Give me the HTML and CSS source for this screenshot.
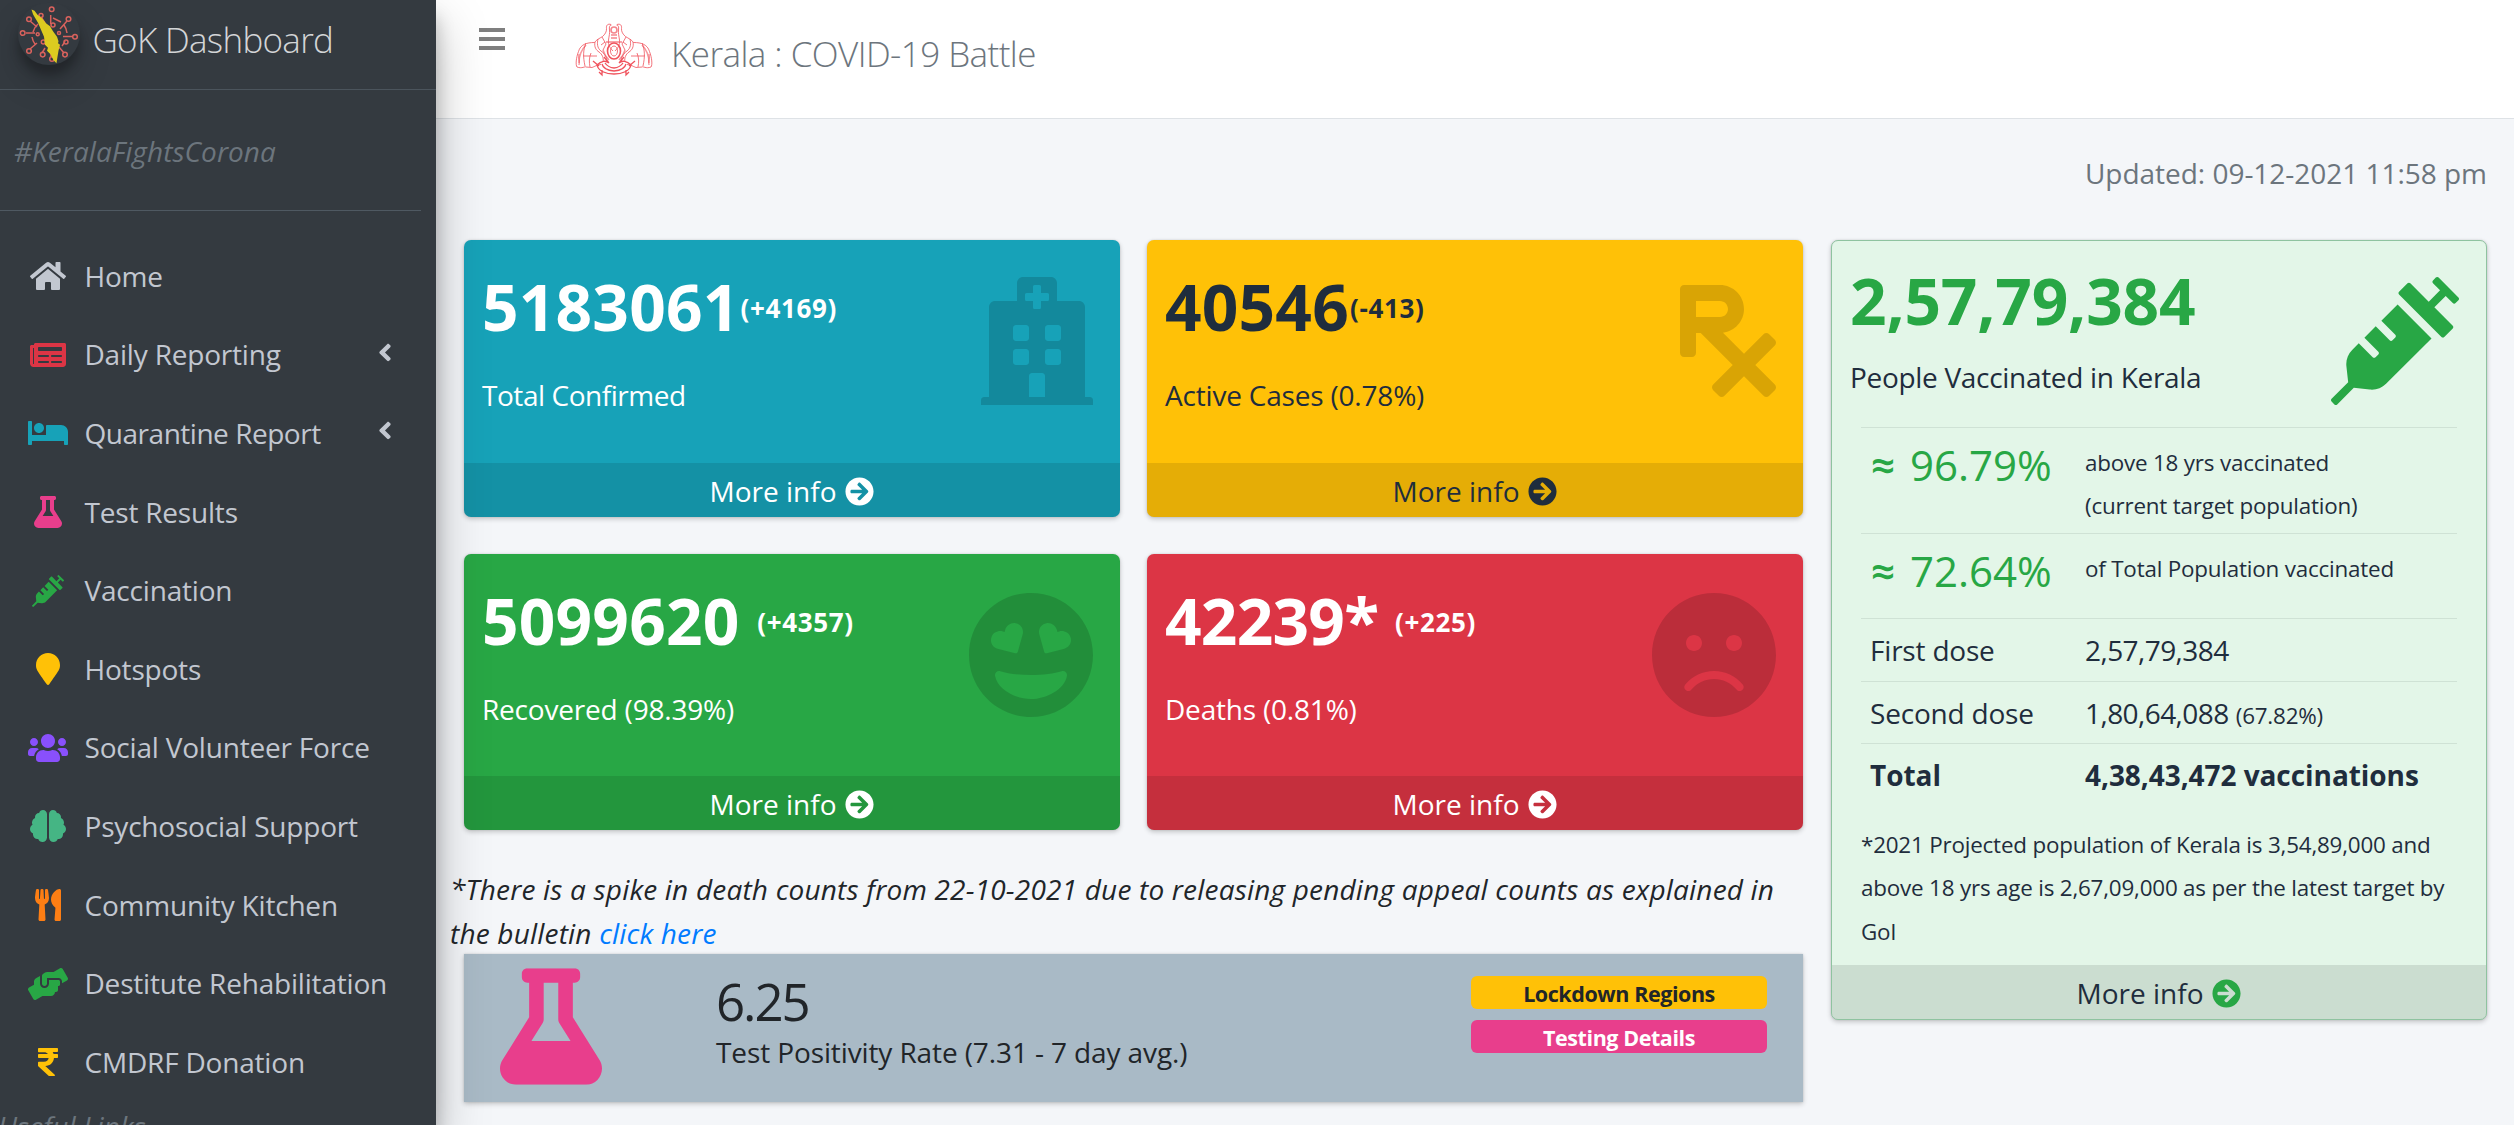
FILE: index.html
```html
<!DOCTYPE html>
<html lang="en">
<head>
<meta charset="utf-8">
<title>GoK Dashboard</title>
<link rel="stylesheet" href="styles.css">
</head>
<body>
<svg class="defs" width="0" height="0">
  <symbol id="arrow" viewBox="0 0 512 512"><path d="M256 8c137 0 248 111 248 248S393 504 256 504 8 393 8 256 119 8 256 8zm-28.9 143.6l75.5 72.4H120c-13.3 0-24 10.7-24 24v16c0 13.3 10.7 24 24 24h182.6l-75.5 72.4c-9.7 9.3-9.9 24.8-.4 34.3l11 10.9c9.4 9.4 24.6 9.4 33.9 0L404.3 273c9.4-9.4 9.4-24.6 0-33.9L271.6 106.3c-9.4-9.4-24.6-9.4-33.9 0l-11 10.9c-9.5 9.6-9.3 25.1.4 34.4z"/></symbol>
  <symbol id="flask" viewBox="0 0 448 512"><path d="M437.2 403.5L320 215V64h8c13.3 0 24-10.7 24-24V24c0-13.3-10.7-24-24-24H120c-13.3 0-24 10.7-24 24v16c0 13.3 10.7 24 24 24h8v151L10.8 403.5C-18.5 450.6 15.3 512 70.9 512h306.2c55.7 0 89.4-61.5 60.1-108.5zM137.9 320l48.2-77.6c3.7-5.2 5.8-11.6 5.8-18.4V64h64v160c0 6.9 2.2 13.2 5.8 18.4l48.2 77.6h-172z"/></symbol>
  <symbol id="syringe" viewBox="0 0 512 512"><path d="M201.5 174.8l55.7 55.8c3.1 3.1 3.1 8.2 0 11.3l-11.3 11.3c-3.1 3.1-8.2 3.1-11.3 0l-55.7-55.8-45.3 45.3 55.8 55.8c3.1 3.1 3.1 8.2 0 11.3l-11.3 11.3c-3.1 3.1-8.2 3.1-11.3 0L111 265.2l-26.4 26.4c-17.3 17.3-25.6 41.1-23 65.4l7.1 63.6L2.3 487c-3.1 3.1-3.1 8.2 0 11.3l11.3 11.3c3.1 3.1 8.2 3.1 11.3 0l66.3-66.3 63.6 7.1c23.9 2.6 47.9-5.4 65.4-23l181.9-181.9-135.7-135.7-64.9 65zm308.2-93.3L430.5 2.3c-3.1-3.1-8.2-3.1-11.3 0l-11.3 11.3c-3.1 3.1-3.1 8.2 0 11.3l28.3 28.3-45.3 45.3-56.6-56.6-17-17c-3.1-3.1-8.2-3.1-11.3 0l-33.9 33.9c-3.1 3.1-3.1 8.2 0 11.3l17 17L424.8 223l17 17c3.1 3.1 8.2 3.1 11.3 0l33.9-34c3.1-3.1 3.1-8.2 0-11.3l-73.5-73.5 45.3-45.3 28.3 28.3c3.1 3.1 8.2 3.1 11.3 0l11.3-11.3c3.1-3.2 3.1-8.2 0-11.4z"/></symbol>
  <symbol id="left" viewBox="0 0 256 512"><path d="M31.7 239l136-136c9.4-9.4 24.6-9.4 33.9 0l22.6 22.6c9.4 9.4 9.4 24.6 0 33.9L127.9 256l96.4 96.4c9.4 9.4 9.4 24.6 0 33.9L201.7 409c-9.4 9.4-24.6 9.4-33.9 0l-136-136c-9.5-9.4-9.5-24.6-.1-34z"/></symbol>
</svg>

<div class="app">
  <aside class="sidebar">
    <a class="brand">
      <svg class="brand-logo" viewBox="0 0 62 62">
        <g fill="none" stroke="#d9625d" stroke-width="1.5">
          <path d="M32.7 12v9M49 18l-7 8M55 33.6H45M46 50l-5-6M33 54v-9M24 50l3-5M12 46l7-6M8 30h9M12 18l7 6M23 14l4 6M20 21a16 16 0 0 0-5 8M14 34a16 16 0 0 0 3 7M35 15l8 4M46 22a16 16 0 0 1 3 8M47 38a16 16 0 0 1-3 5" />
          <circle cx="33.7" cy="6.3" r="2.3"/><circle cx="50.5" cy="16" r="2.3"/><circle cx="57" cy="33.8" r="2.3"/><circle cx="47" cy="51.6" r="2.3"/><circle cx="34" cy="56" r="2.3"/><circle cx="24.7" cy="51.6" r="2.3"/><circle cx="11" cy="48" r="2.3"/><circle cx="4.7" cy="30" r="2.3"/><circle cx="11" cy="16.3" r="2.3"/><circle cx="23" cy="12.4" r="2"/>
          <circle cx="35" cy="22" r="2"/><circle cx="19.7" cy="31.3" r="1.5"/><circle cx="41" cy="30" r="1.5"/><circle cx="25.3" cy="39" r="2"/><circle cx="48" cy="39" r="2"/>
        </g>
        <path fill="#dccb20" d="M13.5 6.5l3 1.2 3 4 4.5 3.600 4 5 4 3 3 5 4 5.500 1.500 4.500-.5 2 2 1.500-1.500 6-1 6-1 6.500-3-3-3-6-3.500-3.500 1-3-3-3-1-8-3-7-3-7-3-5-2-3.500z"/>
      </svg>
      <span class="brand-text">GoK Dashboard</span>
    </a>
    <div class="user-panel">#KeralaFightsCorona</div>
    <nav class="nav">
      <a class="nav-item"><span class="ico"><svg style="width:36px" viewBox="0 0 576 512"><path d="M280.37 148.26L96 300.11V464a16 16 0 0 0 16 16l112.06-.29a16 16 0 0 0 15.92-16V368a16 16 0 0 1 16-16h64a16 16 0 0 1 16 16v95.64a16 16 0 0 0 16 16.05L464 480a16 16 0 0 0 16-16V300L295.67 148.26a12.19 12.19 0 0 0-15.3 0zM571.6 251.47L488 182.56V44.05a12 12 0 0 0-12-12h-56a12 12 0 0 0-12 12v72.61L318.47 43a48 48 0 0 0-61 0L4.34 251.47a12 12 0 0 0-1.6 16.9l25.5 31A12 12 0 0 0 45.15 301l235.22-193.74a12.19 12.19 0 0 1 15.3 0L530.9 301a12 12 0 0 0 16.9-1.6l25.5-31a12 12 0 0 0-1.7-16.93z"/></svg></span><span>Home</span></a>
      <a class="nav-item"><span class="ico red"><svg style="width:36px" viewBox="0 0 576 512"><path d="M552 64H88c-13.255 0-24 10.745-24 24v8H24c-13.255 0-24 10.745-24 24v272c0 30.928 25.072 56 56 56h472c26.51 0 48-21.490 48-48V88c0-13.255-10.745-24-24-24zM56 400a8 8 0 0 1-8-8V144h16v248a8 8 0 0 1-8 8zm236-16H140c-6.627 0-12-5.373-12-12v-8c0-6.627 5.373-12 12-12h152c6.627 0 12 5.373 12 12v8c0 6.627-5.373 12-12 12zm208 0H348c-6.627 0-12-5.373-12-12v-8c0-6.627 5.373-12 12-12h152c6.627 0 12 5.373 12 12v8c0 6.627-5.373 12-12 12zm-208-96H140c-6.627 0-12-5.373-12-12v-8c0-6.627 5.373-12 12-12h152c6.627 0 12 5.373 12 12v8c0 6.627-5.373 12-12 12zm208 0H348c-6.627 0-12-5.373-12-12v-8c0-6.627 5.373-12 12-12h152c6.627 0 12 5.373 12 12v8c0 6.627-5.373 12-12 12zm0-96H140c-6.627 0-12-5.373-12-12v-40c0-6.627 5.373-12 12-12h360c6.627 0 12 5.373 12 12v40c0 6.627-5.373 12-12 12z"/></svg></span><span>Daily Reporting</span><svg class="chev" viewBox="0 0 256 512"><use href="#left"/></svg></a>
      <a class="nav-item"><span class="ico teal"><svg style="width:40px" viewBox="0 0 640 512"><path d="M176 256c44.11 0 80-35.89 80-80s-35.89-80-80-80-80 35.89-80 80 35.89 80 80 80zm352-128H304c-8.84 0-16 7.16-16 16v144H64V80c0-8.84-7.16-16-16-16H16C7.16 64 0 71.16 0 80v352c0 8.84 7.16 16 16 16h32c8.84 0 16-7.16 16-16v-48h512v48c0 8.84 7.16 16 16 16h32c8.84 0 16-7.16 16-16V240c0-61.86-50.14-112-112-112z"/></svg></span><span class="fit-q">Quarantine Report</span><svg class="chev" viewBox="0 0 256 512"><use href="#left"/></svg></a>
      <a class="nav-item"><span class="ico pink"><svg style="width:28px" viewBox="0 0 448 512"><use href="#flask"/></svg></span><span>Test Results</span></a>
      <a class="nav-item"><span class="ico green"><svg style="width:32px" viewBox="0 0 512 512"><use href="#syringe"/></svg></span><span>Vaccination</span></a>
      <a class="nav-item"><span class="ico yellow"><svg style="width:24px" viewBox="0 0 384 512"><path d="M172.268 501.67C26.97 291.031 0 269.413 0 192 0 85.961 85.961 0 192 0s192 85.961 192 192c0 77.413-26.97 99.031-172.268 309.67-9.535 13.774-29.93 13.773-39.464 0z"/></svg></span><span>Hotspots</span></a>
      <a class="nav-item"><span class="ico purple"><svg style="width:40px" viewBox="0 0 640 512"><path d="M96 224c35.3 0 64-28.7 64-64s-28.7-64-64-64-64 28.7-64 64 28.7 64 64 64zm448 0c35.3 0 64-28.7 64-64s-28.7-64-64-64-64 28.7-64 64 28.7 64 64 64zm32 32h-64c-17.6 0-33.5 7.1-45.1 18.6 40.3 22.1 68.9 62 75.1 109.4h66c17.7 0 32-14.3 32-32v-32c0-35.3-28.7-64-64-64zm-256 0c61.9 0 112-50.1 112-112S381.9 32 320 32 208 82.1 208 144s50.1 112 112 112zm76.8 32h-8.3c-20.8 10-43.9 16-68.5 16s-47.600-6-68.5-16h-8.3C179.6 288 128 339.6 128 403.2V432c0 26.5 21.5 48 48 48h288c26.5 0 48-21.5 48-48v-28.8c0-63.6-51.6-115.2-115.2-115.2zm-223.7-13.4C161.5 263.1 145.6 256 128 256H64c-35.3 0-64 28.7-64 64v32c0 17.7 14.3 32 32 32h65.9c6.3-47.4 34.9-87.3 75.2-109.4z"/></svg></span><span>Social Volunteer Force</span></a>
      <a class="nav-item"><span class="ico mint"><svg style="width:36px" viewBox="0 0 576 512"><path d="M208 0c-29.9 0-54.7 20.5-61.8 48.2-.8 0-1.4-.2-2.2-.2-35.3 0-64 28.7-64 64 0 4.8.6 9.5 1.7 14C52.5 138 32 166.6 32 200c0 12.6 3.2 24.3 8.3 34.9C16.3 248.7 0 274.3 0 304c0 33.3 20.4 61.9 49.4 73.9-.9 4.6-1.4 9.3-1.4 14.1 0 39.8 32.2 72 72 72 4.1 0 8.1-.5 12-1.2 9.6 28.5 36.2 49.2 68 49.2 39.8 0 72-32.2 72-72V64c0-35.3-28.7-64-64-64zm368 304c0-29.7-16.3-55.3-40.3-69.1 5.2-10.6 8.3-22.3 8.3-34.9 0-33.4-20.5-62-49.7-74 1-4.5 1.7-9.2 1.7-14 0-35.3-28.7-64-64-64-.8 0-1.5.2-2.2.2C422.7 20.5 397.9 0 368 0c-35.3 0-64 28.6-64 64v376c0 39.8 32.2 72 72 72 31.8 0 58.4-20.7 68-49.2 3.900.7 7.9 1.2 12 1.2 39.8 0 72-32.2 72-72 0-4.8-.5-9.5-1.4-14.1 29-12 49.400-40.6 49.400-73.9z"/></svg></span><span>Psychosocial Support</span></a>
      <a class="nav-item"><span class="ico orange"><svg style="width:26px" viewBox="0 0 416 512"><path d="M207.9 15.2c.8 4.7 16.1 94.5 16.1 128.8 0 52.3-27.8 89.6-68.9 104.6L168 486.7c.7 13.7-10.2 25.3-24 25.3H80c-13.7 0-24.7-11.5-24-25.3l12.9-238.1C27.7 233.6 0 196.2 0 144 0 109.6 15.3 19.9 16.1 15.2 19.3-5.1 61.4-5.4 64 16.3v141.2c1.3 3.4 15.1 3.2 16 0 1.4-25.3 7.9-139.2 8-141.8 3.3-20.8 44.7-20.8 47.9 0 .2 2.7 6.6 116.5 8 141.8.9 3.2 14.8 3.4 16 0V16.3c2.6-21.6 44.8-21.4 48-1.1zm119.2 285.7l-15 185.1c-1.2 14 9.9 26 23.9 26h56c13.3 0 24-10.7 24-24V24c0-13.2-10.7-24-24-24-82.5 0-221.4 178.5-64.9 300.9z"/></svg></span><span>Community Kitchen</span></a>
      <a class="nav-item"><span class="ico green"><svg style="width:40px" viewBox="0 0 640 512"><path d="M488 192H336v56c0 39.7-32.3 72-72 72s-72-32.3-72-72V126.400l-64.900 39C107.8 176.9 96 197.8 96 220.2v47.3l-80 46.2C.7 322.5-4.6 342.1 4.3 357.4l80 138.6c8.8 15.3 28.4 20.5 43.7 11.7L231.4 448H368c35.3 0 64-28.7 64-64h16c17.7 0 32-14.3 32-32v-64h8c13.3 0 24-10.7 24-24v-48c0-13.3-10.7-24-24-24zm147.7-37.4L555.7 16C546.9.7 527.3-4.5 512 4.3L408.6 64H306.4c-12 0-23.7 3.4-33.9 9.7L239 94.6c-9.4 5.8-15 16.1-15 27.1V248c0 22.1 17.9 40 40 40s40-17.9 40-40v-88h184c30.9 0 56 25.1 56 56v28.5l80-46.2c15.3-8.9 20.5-28.4 11.7-43.7z"/></svg></span><span>Destitute Rehabilitation</span></a>
      <a class="nav-item"><span class="ico yellow"><svg style="width:20px" viewBox="0 0 320 512"><path d="M308 96c6.627 0 12-5.373 12-12V44c0-6.627-5.373-12-12-12H12C5.373 32 0 37.373 0 44v44.748c0 6.627 5.373 12 12 12h85.28c27.308 0 48.261 9.958 60.97 27.252H12c-6.627 0-12 5.373-12 12v40c0 6.627 5.373 12 12 12h158.757c-6.217 36.086-32.961 58.632-74.757 58.632H12c-6.627 0-12 5.373-12 12v53.012c0 3.349 1.4 6.546 3.861 8.818l165.052 152.356a12.001 12.001 0 0 0 8.139 3.182h82.562c10.924 0 16.166-13.408 8.139-20.818L116.871 319.906c76.499-2.34 131.144-53.395 138.318-127.906H308c6.627 0 12-5.373 12-12v-40c0-6.627-5.373-12-12-12h-58.69c-3.486-11.541-8.28-22.246-14.252-32H308z"/></svg></span><span>CMDRF Donation</span></a>
      <div class="nav-header">Useful Links</div>
    </nav>
  </aside>

  <div class="page">
    <header class="topbar">
      <div class="bars"><i></i><i></i><i></i></div>
      <svg class="emblem" viewBox="0 0 78 54" fill="none" stroke="#f0525c" stroke-width=".8">
        <g id="half">
          <path d="M38 28c-3-3-5-6-4.500-11 .5-4 1.500-7 1-10-.5-3 .2-5 2-5M36 1.500c-3-1-5 .5-4.500 4 .3 3-1.500 6-4 8-3 2-6 3-8 6-8 0-14 2-16 9C1 35 .500 42 2 44c5 2 8-1 9 0l6 .500c3-1 5-3 9-3M20 19c-1 5 1 8 4 10s5 6 4 10M4 31c-1 4 1 7 0 11M11 20c-3 7-3 14-1 23M16 30c-2 5-2 9-1 14M23 16c-1 4-1 9 3 12s6 6 6 11M27 14l4 7-3 6M8 33h14M30 19l-4 3" />
          <path d="M39 51c-8 0-16-3-17-9 4-4 9-5 12-2M39 48c-6-.5-11-3-12-7M39 45c-4-.5-7-2-9-5M24 49l3 3v-5M18 38l6 5M29 34l5 6" stroke-width="1.300"/>
          <path d="M11 22c-5 5-7 12-7 18M28 27c1 4 3 7 6 10" stroke-width="1.500" opacity=".6"/>
        </g>
        <use href="#half" transform="matrix(-1 0 0 1 78 0)"/>
        <ellipse cx="39" cy="28" rx="6.500" ry="8" stroke-width="1.600"/><ellipse cx="39" cy="28" rx="3.500" ry="5"/>
        <circle cx="39" cy="7" r="3" stroke-width="1.600" opacity=".7"/><path d="M36 12h6M36 15h6M31 19h16" stroke-width="1.500" opacity=".7"/>
      </svg>
      <span class="title">Kerala : COVID-19 Battle</span>
    </header>

    <main class="content">
      <p class="updated">Updated: 09-12-2021 11:58 pm</p>
      <div class="columns">
        <div class="left">
          <div class="cards">
            <section class="card info">
              <div class="card-body"><h3>5183061<sup>(+4169)</sup></h3><p class="fit-t">Total Confirmed</p>
                <svg class="big" style="width:112px" viewBox="0 0 448 512"><path d="M448 492v20H0v-20c0-6.627 5.373-12 12-12h20V120c0-13.255 10.745-24 24-24h88V24c0-13.255 10.745-24 24-24h112c13.255 0 24 10.745 24 24v72h88c13.255 0 24 10.745 24 24v360h20c6.627 0 12 5.373 12 12zM308 192h-40c-6.627 0-12 5.373-12 12v40c0 6.627 5.373 12 12 12h40c6.627 0 12-5.373 12-12v-40c0-6.627-5.373-12-12-12zm-168 64h40c6.627 0 12-5.373 12-12v-40c0-6.627-5.373-12-12-12h-40c-6.627 0-12 5.373-12 12v40c0 6.627 5.373 12 12 12zm104 128h-40c-6.627 0-12 5.373-12 12v84h64v-84c0-6.627-5.373-12-12-12zm64-96h-40c-6.627 0-12 5.373-12 12v40c0 6.627 5.373 12 12 12h40c6.627 0 12-5.373 12-12v-40c0-6.627-5.373-12-12-12zm-116 12c0-6.627-5.373-12-12-12h-40c-6.627 0-12 5.373-12 12v40c0 6.627 5.373 12 12 12h40c6.627 0 12-5.373 12-12v-40zM182 96h26v26a6 6 0 0 0 6 6h20a6 6 0 0 0 6-6V96h26a6 6 0 0 0 6-6V70a6 6 0 0 0-6-6h-26V38a6 6 0 0 0-6-6h-20a6 6 0 0 0-6 6v26h-26a6 6 0 0 0-6 6v20a6 6 0 0 0 6 6z"/></svg></div>
              <a class="more">More info <svg><use href="#arrow"/></svg></a>
            </section>
            <section class="card warning">
              <div class="card-body"><h3>40546<sup>(-413)</sup></h3><p>Active Cases (0.78%)</p>
                <svg class="big" style="width:96px" viewBox="0 0 384 512"><path d="M301.26 352l78.06-78.06c6.25-6.25 6.25-16.38 0-22.63l-22.63-22.63c-6.25-6.25-16.38-6.25-22.63 0L256 306.74l-83.96-83.96C219.31 216.8 256 176.89 256 128c0-53.02-42.98-96-96-96H16C7.16 32 0 39.16 0 48v256c0 8.84 7.16 16 16 16h32c8.84 0 16-7.16 16-16v-80h18.75l128 128-78.06 78.06c-6.25 6.25-6.25 16.38 0 22.63l22.63 22.63c6.25 6.25 16.38 6.25 22.63 0L256 397.25l78.06 78.06c6.25 6.25 16.38 6.25 22.63 0l22.63-22.63c6.25-6.25 6.25-16.38 0-22.63L301.26 352zM64 96h96c17.64 0 32 14.36 32 32s-14.36 32-32 32H64V96z"/></svg></div>
              <a class="more">More info <svg><use href="#arrow"/></svg></a>
            </section>
            <section class="card success">
              <div class="card-body"><h3>5099620 <sup>(+4357)</sup></h3><p>Recovered (98.39%)</p>
                <svg class="big" style="width:124px" viewBox="0 0 496 512"><path d="M248 8C111 8 0 119 0 256s111 248 248 248 248-111 248-248S385 8 248 8zM90.4 183.6c6.7-17.6 26.7-26.7 44.9-21.9l7.1 1.9 2-7.1c5-18.1 22.8-30.9 41.5-27.9 21.4 3.4 34.4 24.2 28.8 44.5L195.3 243c-1.2 4.5-5.9 7.2-10.5 6l-70.2-18.2c-20.4-5.4-31.9-27-24.2-47.2zM248 432c-60.6 0-134.5-38.3-143.8-93.3-2-11.8 9.2-21.5 20.7-17.9C155.1 330.5 200 336 248 336s92.9-5.5 123.1-15.2c11.4-3.6 22.6 6.1 20.7 17.9-9.3 55-83.2 93.3-143.8 93.3zm133.4-201.3l-70.2 18.2c-4.5 1.2-9.2-1.5-10.5-6L281.3 173c-5.6-20.3 7.4-41.1 28.8-44.5 18.6-3 36.4 9.8 41.5 27.9l2 7.1 7.1-1.9c18.2-4.7 38.2 4.3 44.9 21.9 7.7 20.3-3.800 41.9-24.2 47.2z"/></svg></div>
              <a class="more">More info <svg><use href="#arrow"/></svg></a>
            </section>
            <section class="card danger">
              <div class="card-body"><h3 class="fit-d">42239* <sup>(+225)</sup></h3><p>Deaths (0.81%)</p>
                <svg class="big" style="width:124px" viewBox="0 0 496 512"><path d="M248 8C111 8 0 119 0 256s111 248 248 248 248-111 248-248S385 8 248 8zm80 168c17.7 0 32 14.3 32 32s-14.3 32-32 32-32-14.3-32-32 14.3-32 32-32zm-160 0c17.7 0 32 14.3 32 32s-14.3 32-32 32-32-14.3-32-32 14.3-32 32-32zm170.2 218.2C315.8 367.4 282.9 352 248 352s-67.8 15.4-90.2 42.2c-13.5 16.3-38.1-4.2-24.6-20.5C161.7 339.6 203.6 320 248 320s86.3 19.6 114.7 53.8c13.6 16.2-11 36.7-24.5 20.4z"/></svg></div>
              <a class="more">More info <svg><use href="#arrow"/></svg></a>
            </section>
          </div>
          <p class="note">*There is a spike in death counts from 22-10-2021 due to releasing pending appeal counts as explained in<br>the bulletin <a>click here</a></p>
          <section class="positivity">
            <svg class="flask" viewBox="0 0 448 512"><use href="#flask"/></svg>
            <div class="rate"><strong>6.25</strong><span>Test Positivity Rate (7.31 - 7 day avg.)</span></div>
            <div class="buttons"><a class="btn lockdown">Lockdown Regions</a><a class="btn testing">Testing Details</a></div>
          </section>
        </div>

        <section class="card vaccine">
          <div class="card-body">
            <h3>2,57,79,384</h3><p>People Vaccinated in Kerala</p>
            <svg class="big" style="width:128px" viewBox="0 0 512 512"><use href="#syringe"/></svg>
            <div class="table">
              <div class="row r1"><span class="pct"><b>≈</b> 96.79%</span><small>above 18 yrs vaccinated<br>(current target population)</small></div>
              <div class="row r2"><span class="pct"><b>≈</b> 72.64%</span><small>of Total Population vaccinated</small></div>
              <div class="row dose"><span>First dose</span><span class="num">2,57,79,384</span></div>
              <div class="row dose"><span>Second dose</span><span><span class="num">1,80,64,088</span> <small>(67.82%)</small></span></div>
              <div class="row dose total"><span>Total</span><span>4,38,43,472 vaccinations</span></div>
            </div>
            <small class="foot">*2021 Projected population of Kerala is 3,54,89,000 and<br>above 18 yrs age is 2,67,09,000 as per the latest target by<br>GoI</small>
          </div>
          <a class="more">More info <svg><use href="#arrow"/></svg></a>
        </section>
      </div>
    </main>
  </div>
</div>
</body>
</html>
```
FILE: styles.css
```css
* { box-sizing: border-box; }
body {
  margin: 0;
  font: 28px/44px "Open Sans", "Noto Sans", sans-serif;
  letter-spacing: -.007em;
  color: #212529;
  background: #f4f6f9;
}
p, h3 { margin: 0; }
svg { display: block; fill: currentColor; }
.defs { position: absolute; }
.app { display: flex; height: 1125px; overflow: hidden; }

/* sidebar */
.sidebar {
  flex: none;
  width: 436px;
  height: 1125px;
  background: #343a40;
  color: #c2c7d0;
  position: relative;
  z-index: 2;
  box-shadow: 0 24px 49px rgba(0, 0, 0, .25), 0 17px 17px rgba(0, 0, 0, .22);
}
.brand { display: flex; height: 90px; padding: 3px 0 0 18px; border-bottom: 1px solid #4b545c; }
.brand-logo { width: 62px; height: 62px; flex: none; border-radius: 50%; box-shadow: 0 17px 34px rgba(0, 0, 0, .19), 0 10px 10px rgba(0, 0, 0, .23); }
.brand-text { margin: 12px 0 0 12.5px; font-size: 35px; line-height: 50px; font-weight: 300; letter-spacing: -.02em; color: #d3d5d7; }
.user-panel { width: 421px; height: 121px; padding: 39px 0 0 14px; border-bottom: 1px solid #4f5962; font-style: italic; letter-spacing: .002em; color: #6c757d; }
.nav { padding-top: 26px; }
.nav-item { display: flex; align-items: center; height: 78.6px; line-height: 79px; padding-left: 26px; }
.ico { width: 44px; margin-right: 14.5px; display: flex; justify-content: center; }
.ico svg { height: 32px; }
.chev { width: 14px; height: 29px; margin: 0 44px 5px auto; }
.fit-q { letter-spacing: -.017em; }
.nav-header { margin: 2px 0 0 -2px; font-style: italic; letter-spacing: .004em; color: #6c757d; }
.red { color: #dc3545; }
.teal { color: #17a2b8; }
.pink { color: #e83e8c; }
.green { color: #28a745; }
.yellow { color: #ffc107; }
.purple { color: #8950fc; }
.mint { color: #45b584; }
.orange { color: #fd7e14; }

/* header */
.page { flex: 1; }
.topbar { display: flex; height: 119px; padding-left: 43px; background: #fff; border-bottom: 1px solid #dee2e6; }
.bars { display: grid; gap: 5px; align-content: start; width: 26px; padding-top: 28px; }
.bars i { height: 4px; background: #7f7f7f; }
.emblem { width: 78px; height: 54px; margin: 23px 0 0 70px; fill: none; }
.title { margin: 29px 0 0 18px; font-size: 35px; line-height: 50px; font-weight: 300; letter-spacing: -.016em; color: #6c757d; }

/* content */
.content { padding: 32px 27px 0 28px; }
.updated { text-align: right; letter-spacing: -.001em; color: #6c757d; }
.columns { display: grid; grid-template-columns: 1339px 656px; column-gap: 28px; margin-top: 45px; align-items: start; }
.cards { display: grid; grid-template-columns: 656px 656px; grid-template-rows: 277px 276px; gap: 37px 27px; }
.card { display: flex; flex-direction: column; border-radius: 7px; overflow: hidden; box-shadow: 0 0 2px rgba(0, 0, 0, .13), 0 2px 5px rgba(0, 0, 0, .2); }
.card-body { flex: 1; position: relative; padding: 28px 18px 0; }
.card h3 { font-size: 64px; line-height: 77px; font-weight: 700; letter-spacing: .003em; white-space: nowrap; }
.card sup { font-size: 26px; line-height: 0; vertical-align: 13px; letter-spacing: .025em; margin-left: 1px; }
.card .fit-d { letter-spacing: -.012em; }
.card p { margin-top: 28px; }
.card .fit-t { letter-spacing: -.016em; }
.big { position: absolute; top: 36.5px; right: 27px; height: 128px; color: rgba(0, 0, 0, .15); }
.more { display: flex; align-items: center; justify-content: center; gap: 9px; height: 54px; padding-top: 2px; background: rgba(0, 0, 0, .1); letter-spacing: 0; }
.more svg { width: 29px; height: 29px; }
.info { background: #17a2b8; color: #fff; }
.warning { background: #ffc107; color: #1f2d3d; }
.success { background: #28a745; color: #fff; }
.danger { background: #dc3545; color: #fff; }

.note { margin: 38px 0 0 -14px; font-style: italic; letter-spacing: .0068em; line-height: 43.5px; height: 86px; white-space: nowrap; }
.note a { color: #007bff; }

.positivity { display: flex; height: 148px; padding: 14px 36px 0; background: #a9bac6; box-shadow: 0 0 2px rgba(0, 0, 0, .13), 0 2px 5px rgba(0, 0, 0, .2); }
.flask { width: 102px; height: 117px; color: #e83e8c; }
.rate { display: flex; flex-direction: column; margin-left: 114px; letter-spacing: -.004em; }
.rate strong { padding-top: 1px; font-size: 51px; line-height: 64px; font-weight: 400; letter-spacing: -.04em; }
.rate span { margin-top: -3px; }
.buttons { display: grid; gap: 11px; align-content: start; width: 296px; margin-left: auto; padding-top: 8px; }
.btn { height: 33px; border-radius: 6px; text-align: center; font-size: 21.5px; font-weight: 700; line-height: 36px; letter-spacing: -.02em; }
.lockdown { background: #ffc107; color: #212529; }
.testing { background: #e83e8c; color: #fff; }

/* vaccination card */
.vaccine { height: 780px; border: 1px solid #8fc3a0; background: #e3f6e8; color: #1f2d3d; }
.vaccine .card-body { padding-top: 21px; }
.vaccine h3 { color: #28a745; letter-spacing: -.003em; }
.vaccine p { margin-top: 16px; letter-spacing: -.011em; }
.vaccine .big { color: #28a745; top: 36px; right: 27px; }
.vaccine .more svg { color: #28a745; }
.table { margin: 28px 11px 0; }
.row { display: grid; grid-template-columns: 215px 1fr; padding-left: 9px; border-top: 1px solid #cfe2d5; white-space: nowrap; }
.r1 { height: 106px; }
.r2 { height: 85px; }
.pct { padding: 5px 0 0 1px; font-size: 42px; line-height: 63px; letter-spacing: 0; color: #28a745; }
.pct b { margin-right: 4px; font-weight: 600; }
small { font-size: 22.4px; line-height: 43.2px; }
.r1 small, .r2 small { padding-top: 13px; }
.dose { height: 62.5px; padding-top: 9px; }
.dose .num { letter-spacing: -.02em; }
.total { font-weight: 700; letter-spacing: -.002em; }
.foot { display: block; margin: 17px 11px 0; line-height: 43.6px; letter-spacing: -.0085em; white-space: nowrap; }
```
